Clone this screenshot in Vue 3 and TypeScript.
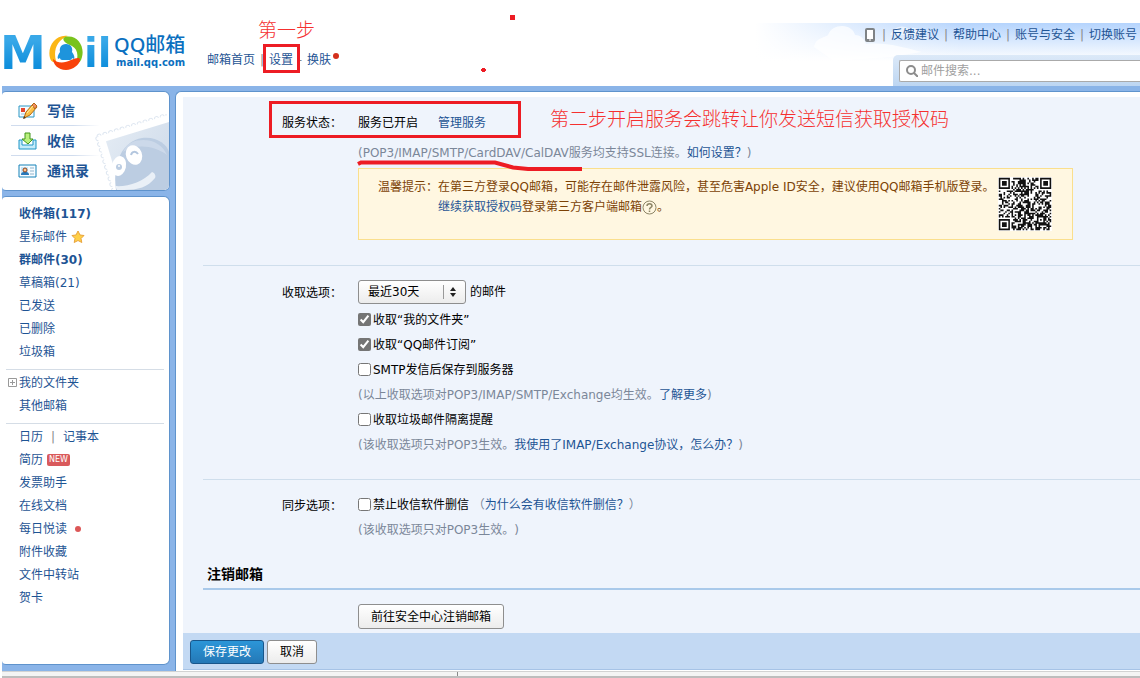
<script setup lang="ts">
import { ref } from 'vue'

interface Folder {
  name: string
  bold?: boolean
  mark?: 'star' | 'new' | 'dot' | 'plus'
  second?: string
}

const folderGroups: Folder[][] = [
  [
    { name: '收件箱(117)', bold: true },
    { name: '星标邮件', mark: 'star' },
    { name: '群邮件(30)', bold: true },
    { name: '草稿箱(21)' },
    { name: '已发送' },
    { name: '已删除' },
    { name: '垃圾箱' },
  ],
  [{ name: '我的文件夹', mark: 'plus' }, { name: '其他邮箱' }],
  [
    { name: '日历', second: '记事本' },
    { name: '简历', mark: 'new' },
    { name: '发票助手' },
    { name: '在线文档' },
    { name: '每日悦读', mark: 'dot' },
    { name: '附件收藏' },
    { name: '文件中转站' },
    { name: '贺卡' },
  ],
]

const topLinks: string[] = ['反馈建议', '帮助中心', '账号与安全', '切换账号']

const range = ref('最近30天')
const myFolders = ref(true)
const subscriptions = ref(true)
const saveSent = ref(false)
const spamNotice = ref(false)
const forbidDelete = ref(false)

const QR_SIZE = 33

function square(x: number, y: number, cx: number, cy: number): number {
  return Math.max(Math.abs(x - cx), Math.abs(y - cy))
}

function buildQr(): string {
  let seed = 20117
  let d = ''
  for (let y = 0; y < QR_SIZE; y++) {
    for (let x = 0; x < QR_SIZE; x++) {
      seed = (seed * 1103515245 + 12345) % 2147483648
      let dark = (seed >> 12) % 100 < 54
      if (x === 6 || y === 6) dark = (x + y) % 2 === 0
      const align = square(x, y, 26, 26)
      if (align <= 2) dark = align !== 1
      for (const [cx, cy] of [[3, 3], [29, 3], [3, 29]]) {
        const ring = square(x, y, cx, cy)
        if (ring <= 4) dark = ring < 2 || ring === 3
      }
      if (dark) d += `M${x} ${y}h1v1h-1z`
    }
  }
  return d
}

const qrPath = buildQr()
const perforation = Array.from({ length: 14 }, (_, i) => 3 + i * 6)
</script>

<template>
  <div class="page" lang="zh-CN">
    <header class="header">
      <div class="brand" aria-label="QQ邮箱">
        <span class="brand-m">M</span>
        <svg class="brand-ball" width="36" height="36" viewBox="0 0 36 36" aria-hidden="true">
          <circle cx="18" cy="18" r="18" fill="#fff" />
          <path d="M20 1C7-1-1 12 2 23c1 4 4 5 6 3C5 15 9 5 20 1z" fill="#fbb615" />
          <path d="M17 2c12-3 20 9 17 20-1 5-4 7-6 6 3-9 1-14-4-17-4-2-7-3-8-5-1-2-1-3 1-4z" fill="#79c31c" />
          <path d="M5 24c5 5 12 4 18 1 5-2 9-3 9 0 0 4-7 10-14 10C10 35 5 29 5 24z" fill="#f8420b" />
          <path d="M18 9c-5 0-7 4-6 8-2 3-3 5-2 7l2-1c0 1 1 2 2 2h8c1 0 2-1 2-2l2 1c1-2 0-4-2-7 1-4-1-8-6-8z" fill="#1e94dc" />
        </svg>
        <span class="brand-il">il</span>
        <div class="brand-text">
          <strong>QQ邮箱</strong>
          <span>mail.qq.com</span>
        </div>
      </div>

      <nav class="quick">
        <a href="#">邮箱首页</a><i>|</i><a href="#">设置</a><i>-</i><a href="#">换肤</a>
        <b class="quick-dot"></b>
      </nav>

      <div class="sky">
        <svg class="cloud" width="110" height="40" viewBox="0 0 110 40" aria-hidden="true">
          <path d="M0 24C2 14 11 15 14 12 16 6 22 3 28 3c7 0 12 4 13 9 6 0 10 5 11 9 20-2 36 3 56 8L76 34 20 38z" fill="#fff" opacity=".7" />
          <path d="M76 12c4-8 12-11 19-6 5-3 12 0 13 6z" fill="#fff" opacity=".5" />
        </svg>
        <nav class="toplinks">
          <svg width="10" height="14" viewBox="0 0 10 14" aria-hidden="true">
            <rect x="1" y="1" width="8" height="12" rx="1" fill="#fff" stroke="#7f8386" stroke-width="2" />
            <path d="M1 11h8v2H1z" fill="#7f8386" />
            <path d="M4 12h2" stroke="#fff" />
          </svg>
          <template v-for="link in topLinks" :key="link"><i>|</i><a href="#">{{ link }}</a></template>
        </nav>
        <form class="search" @submit.prevent>
          <label class="search-box">
            <svg width="12" height="12" viewBox="0 0 12 12" aria-hidden="true">
              <circle cx="5" cy="5" r="4" fill="none" stroke="#8c8c8c" stroke-width="2" />
              <path d="M8 8l4 4" stroke="#8c8c8c" stroke-width="2" />
            </svg>
            <input type="text" placeholder="邮件搜索..." aria-label="邮件搜索" />
          </label>
        </form>
      </div>
    </header>

    <div class="frame">
      <aside class="side">
        <nav class="card compose">
          <svg class="stamp" width="76" height="76" viewBox="0 0 76 76" aria-hidden="true">
            <defs>
              <linearGradient id="stampFill" x1="0" y1="0" x2="1" y2="1">
                <stop offset="0" stop-color="#e2eaf3" />
                <stop offset="1" stop-color="#c3d2e5" />
              </linearGradient>
            </defs>
            <g transform="translate(3 22) rotate(-17)">
              <circle v-for="p in perforation" :key="'t' + p" :cx="p" cy="1" r="2" fill="#fff" stroke="#dfe7f1" />
              <circle v-for="p in perforation" :key="'l' + p" cx="1" :cy="p" r="2" fill="#fff" stroke="#dfe7f1" />
              <path d="M1 1h100v90H1z" fill="#fff" />
              <path d="M8 8h90v80H8z" fill="url(#stampFill)" />
            </g>
            <path d="M23 76C19 48 30 27 49 24c14-2 25 6 27 14v38z" fill="#bccde2" />
            <path d="M30 38c4-9 11-12 20-12 12 0 20 6 24 15-12-9-31-12-44-3z" fill="#dbe5f1" opacity=".5" />
            <ellipse cx="26" cy="52" rx="7" ry="10" transform="rotate(12 26 52)" fill="#fff" />
            <ellipse cx="41" cy="41" rx="8" ry="10" transform="rotate(-20 41 41)" fill="#fff" />
            <circle cx="26" cy="53" r="3" fill="#bccde2" />
            <circle cx="26" cy="52" r="1" fill="#fff" />
            <path d="M38 41c1-4 5-4 7-1" fill="none" stroke="#b3c6de" stroke-width="2" />
            <path d="M22 72c13 1 28-4 37-14 3 1 4 4 3 6-7 9-17 12-31 12h-7z" fill="#eaf0f7" />
          </svg>
          <a href="#">
            <svg width="20" height="18" viewBox="0 0 20 18" aria-hidden="true">
              <path d="M1 4h15v11H1z" fill="#f5fbff" stroke="#2a96c4" />
              <path d="M3 6h4v4H3z" fill="#e5462c" />
              <path d="M3 12h5" stroke="#9fc4dc" />
              <path d="M6 16l2-6 7-8 4 3-7 8z" fill="#fdbf45" stroke="#b36a16" />
              <path d="M14 3l2-2 3 3-2 3z" fill="#f28d62" stroke="#b36a16" />
              <path d="M9 11l6-7" stroke="#fff0a4" />
              <path d="M5 17l1-3 2 2z" fill="#5b3a16" />
            </svg>写信</a>
          <a href="#">
            <svg width="20" height="18" viewBox="0 0 20 18" aria-hidden="true">
              <path d="M1 8h3v5h11V8h3v9H1z" fill="#c5ecfa" stroke="#1f95c6" />
              <path d="M7 1h5v6h3l-5 5-6-5h3z" fill="#baf07d" stroke="#43951c" />
            </svg>收信</a>
          <a href="#">
            <svg width="20" height="18" viewBox="0 0 20 18" aria-hidden="true">
              <path d="M1 3h17v12H1z" fill="#f7fcff" stroke="#1581b8" />
              <path d="M3 5h7v8H3z" fill="#c7e6f8" />
              <path d="M3 13c0-3 2-3 4-3s4 0 4 3z" fill="#2878ba" />
              <circle cx="7" cy="8" r="2" fill="#ffc490" stroke="#8a421c" />
              <path d="M12 6h4M12 9h4M12 12h4" stroke="#8fb2cb" />
            </svg>通讯录</a>
        </nav>

        <nav class="card folders">
          <ul v-for="(group, g) in folderGroups" :key="g">
            <li v-for="item in group" :key="item.name" :class="{ bold: item.bold }">
              <svg v-if="item.mark === 'plus'" class="plus" width="9" height="9" viewBox="0 0 9 9" aria-hidden="true">
                <path d="M.5.5h8v8h-8zM2 4.500h5M4.500 2v5" fill="none" stroke="#999" />
              </svg>
              <a href="#">{{ item.name }}</a>
              <template v-if="item.second"><i>|</i><a href="#">{{ item.second }}</a></template>
              <svg v-if="item.mark === 'star'" class="star" width="14" height="13" viewBox="0 0 14 13" aria-hidden="true">
                <path d="M7 1l2 4 4 .5-3 3 .8 4L7 10.500 3.200 12.500l.8-4-3-3L5 5z" fill="#ffd047" stroke="#e8a33d" />
              </svg>
              <span v-if="item.mark === 'new'" class="new">NEW</span>
              <span v-if="item.mark === 'dot'" class="dot"></span>
            </li>
          </ul>
        </nav>
      </aside>

      <main class="main">
        <div class="content">
          <section class="section status">
            <div class="label">服务状态：</div>
            <div class="field">
              <div class="line tall">服务已开启<a class="manage" href="#">管理服务</a></div>
              <div class="line tall hint">(POP3/IMAP/SMTP/CardDAV/CalDAV服务均支持SSL连接。<a href="#">如何设置？</a>)</div>
              <div class="tip">
                <span>温馨提示：</span>
                <p>在第三方登录QQ邮箱，可能存在邮件泄露风险，甚至危害Apple ID安全，建议使用QQ邮箱手机版登录。<br /><a href="#">继续获取授权码</a>登录第三方客户端邮箱<svg class="help" width="15" height="15" viewBox="0 0 15 15" aria-hidden="true">
                  <circle cx="7.500" cy="7.500" r="6.500" fill="none" stroke="#8d8566" />
                  <path d="M5 6c0-3 5-3 5 0 0 1.500-2.500 1.500-2.500 3.500M7.500 10.500v1.500" fill="none" stroke="#8d8566" stroke-width="1.500" />
                </svg>。</p>
                <svg class="qr" width="54" height="54" viewBox="-.5 -.5 34 34" role="img" aria-label="二维码">
                  <path d="M-.5-.5h34v34h-34z" fill="#fff" />
                  <path :d="qrPath" fill="#111" />
                </svg>
              </div>
            </div>
          </section>

          <section class="section receive">
            <label class="label" for="range">收取选项：</label>
            <div class="field">
              <div class="select-row">
                <span class="select">
                  <select id="range" v-model="range">
                    <option>最近30天</option>
                    <option>全部</option>
                  </select>
                  <svg width="16" height="16" viewBox="0 0 16 16" aria-hidden="true">
                    <path d="M.5 1v14" stroke="#999" />
                    <path d="M7 7l3-4 3 4zM7 9l3 4 3-4z" fill="#222" />
                  </svg>
                </span>
                <span>的邮件</span>
              </div>
              <label class="line"><input v-model="myFolders" type="checkbox" />收取“我的文件夹”</label>
              <label class="line"><input v-model="subscriptions" type="checkbox" />收取“QQ邮件订阅”</label>
              <label class="line"><input v-model="saveSent" type="checkbox" />SMTP发信后保存到服务器</label>
              <div class="line hint">(以上收取选项对POP3/IMAP/SMTP/Exchange均生效。<a href="#">了解更多</a>)</div>
              <label class="line"><input v-model="spamNotice" type="checkbox" />收取垃圾邮件隔离提醒</label>
              <div class="line hint">(该收取选项只对POP3生效。<a href="#">我使用了IMAP/Exchange协议，怎么办？</a>)</div>
            </div>
          </section>

          <section class="section sync">
            <div class="label">同步选项：</div>
            <div class="field">
              <div class="line hint"><label><input v-model="forbidDelete" type="checkbox" />禁止收信软件删信</label>&nbsp;（<a href="#">为什么会有收信软件删信？</a>）</div>
              <div class="line hint">(该收取选项只对POP3生效。)</div>
            </div>
          </section>

          <h2>注销邮箱</h2>
          <button class="btn cancel-account" type="button">前往安全中心注销邮箱</button>
        </div>
        <div class="toolbar">
          <button class="btn primary" type="button">保存更改</button>
          <button class="btn" type="button">取消</button>
        </div>
      </main>
    </div>
    <div class="scrollbar"></div>

    <div class="notes">
      <span class="note first">第一步</span>
      <span class="note second">第二步开启服务会跳转让你发送短信获取授权码</span>
      <svg width="1140" height="678" viewBox="0 0 1140 678" aria-hidden="true">
        <g fill="none" stroke="#ed1c24">
          <path d="M264.500 45.500h34v26h-34zM270.500 102.500h249v34h-249z" stroke-width="3" />
          <path d="M358 164l3-1.500h134l18 5 15 1.500h54" stroke-width="4" />
        </g>
        <path d="M510 15h5v5h-5zM482 68h3v1h1v2h-1v1h-3v-1h-1v-2h1z" fill="#ed1c24" />
      </svg>
    </div>
  </div>
</template>

<style>
body {
  margin: 0;
  background: #fff;
}
</style>

<style scoped>
.page {
  position: relative;
  display: flex;
  flex-direction: column;
  min-height: 100vh;
  overflow: hidden;
  font: 12px/20px 'DejaVu Sans', 'Noto Sans CJK SC', sans-serif;
  text-spacing-trim: space-all;
  color: #000;
}
a {
  color: #1e5494;
  text-decoration: none;
}
i {
  font-style: normal;
  color: #888;
}
.header {
  display: flex;
  height: 86px;
}
.brand {
  display: flex;
  align-items: center;
  box-sizing: border-box;
  width: 203px;
  height: 75px;
  padding-top: 31px;
  font-weight: bold;
}
.brand-m,
.brand-il {
  flex: none;
  line-height: 44px;
  background: linear-gradient(#38a8e8 20%, #108fdc 80%);
  background-clip: text;
  color: transparent;
}
.brand-m {
  width: 48px;
  font-size: 46px;
}
.brand-ball {
  flex: none;
}
.brand-il {
  width: 30px;
  font-size: 40px;
}
.brand-text {
  display: flex;
  flex-direction: column;
  gap: 2px;
  margin-bottom: 4px;
  white-space: nowrap;
  color: #0b70c0;
}
.brand-text strong {
  font: bold 20px/22px 'DejaVu Sans', 'Noto Sans CJK SC', sans-serif;
  font-family: 'Noto Sans', 'Noto Sans CJK SC', sans-serif;
  font-weight: 500;
}
.brand-text span {
  padding-left: 2px;
  font: bold 10px/10px 'DejaVu Sans', sans-serif;
}
.quick {
  display: flex;
  align-items: flex-start;
  padding: 50px 0 0 4px;
}
.quick i {
  width: 14px;
  text-align: center;
}
.quick-dot {
  width: 6px;
  height: 6px;
  margin: 3px 0 0 2px;
  border-radius: 50%;
  background: #d3301c;
}
.sky {
  position: relative;
  display: flex;
  flex-direction: column;
  align-items: flex-end;
  flex: 1;
  margin-top: 23px;
  background: linear-gradient(90deg, #fff 52%, rgba(255, 255, 255, 0) 78%), linear-gradient(#b5d4fd, #fff 38px);
}
.cloud {
  position: absolute;
  top: 0;
  right: 216px;
}
.toplinks {
  position: relative;
  display: flex;
  align-items: center;
  height: 24px;
  margin-bottom: 8px;
  padding-right: 3px;
}
.toplinks i {
  width: 14px;
  text-align: center;
}
.toplinks svg {
  margin-right: 2px;
}
.search {
  position: relative;
  box-sizing: border-box;
  width: 247px;
  height: 31px;
  padding: 5px 0 0 6px;
  border-radius: 5px 0 0 0;
  background: linear-gradient(#dce9f8, #bdd6f2);
}
.search-box {
  display: flex;
  align-items: center;
  box-sizing: border-box;
  height: 22px;
  padding-left: 6px;
  border: 1px solid #aaa;
  border-right: 0;
  border-radius: 2px 0 0 2px;
  background: #fff;
}
.search-box input {
  flex: 1;
  min-width: 0;
  padding: 0 3px;
  border: 0;
  outline: 0;
  background: none;
  font: inherit;
}
.search-box input::placeholder {
  color: #a0a0a0;
}
.frame {
  display: flex;
  flex: 1;
  margin-left: 2px;
  padding-top: 5px;
  background: #8ab4e8;
}
.side {
  display: flex;
  flex-direction: column;
  flex: none;
  gap: 5px;
  box-sizing: border-box;
  width: 173px;
  padding: 0 5px 6px 0;
}
.card {
  position: relative;
  border: 1px solid #5f93cc;
  border-left: 0;
  border-radius: 4px 6px 6px 4px;
  background: #fff;
}
.compose {
  padding: 4px 0;
  overflow: hidden;
}
.compose a {
  position: relative;
  display: flex;
  align-items: center;
  gap: 9px;
  height: 29px;
  margin: 0 70px 0 9px;
  padding-left: 7px;
  border-bottom: 1px solid;
  border-image: linear-gradient(90deg, #d0dcee 70%, #fff) 1;
  font-size: 14px;
  font-weight: bold;
}
.compose a:last-child {
  border-bottom-color: transparent;
  border-image: none;
}
.stamp {
  position: absolute;
  right: 0;
  bottom: 0;
}
.folders {
  flex: 1;
  padding: 5px 5px 0 4px;
}
.folders ul {
  margin: 0;
  padding: 0;
  list-style: none;
}
.folders ul + ul {
  margin-top: 6px;
  padding-top: 1px;
  border-top: 1px solid #d5dde6;
}
.folders li {
  position: relative;
  display: flex;
  align-items: center;
  height: 23px;
  padding-left: 13px;
}
.folders .bold {
  font-weight: bold;
}
.folders i {
  width: 20px;
  text-align: center;
}
.plus {
  position: absolute;
  left: 2px;
}
.star {
  margin-left: 4px;
}
.new {
  margin-left: 4px;
  padding: 0 2px;
  border-radius: 2px;
  background: #d95a5c;
  color: #fff;
  font: 8px/12px 'DejaVu Sans', sans-serif;
}
.dot {
  width: 6px;
  height: 6px;
  margin-left: 8px;
  border-radius: 50%;
  background: #dc5757;
}
.main {
  display: flex;
  flex: 1;
  flex-direction: column;
  min-width: 0;
  padding: 5px 0 1px 7px;
  border: solid #5f93cc;
  border-width: 1px 0 0 1px;
  border-radius: 6px 0 0 0;
  background: #fff;
}
.content {
  flex: 1;
  padding: 0 0 4px 20px;
  background: #eff4fc;
}
.section {
  display: grid;
  grid-template-columns: 76px minmax(0, 1fr);
  padding-left: 79px;
}
.section + .section {
  border-top: 1px solid #cfdeec;
}
.status {
  padding-top: 11px;
  padding-bottom: 25px;
}
.status .label {
  line-height: 30px;
}
.receive {
  padding-top: 14px;
  padding-bottom: 22px;
}
.receive > .label {
  line-height: 26px;
}
.sync {
  padding-top: 12px;
}
.sync > .label {
  line-height: 28px;
}
.line {
  display: flex;
  align-items: center;
  height: 25px;
  white-space: nowrap;
}
.tall {
  height: 30px;
}
.manage {
  margin-left: 20px;
}
.hint {
  color: #7b8799;
}
.hint label {
  display: flex;
  align-items: center;
  color: #000;
}
input[type='checkbox'] {
  width: 13px;
  height: 13px;
  margin: 0 2px 0 0;
  accent-color: #757575;
}
.tip {
  display: flex;
  box-sizing: border-box;
  max-width: 715px;
  padding: 8px 20px 8px 19px;
  border: 1px solid #fadf8d;
  background: #fff7e1;
  color: #7c4205;
  white-space: nowrap;
}
.tip p {
  flex: 1;
  margin: 0;
}
.help {
  vertical-align: -4px;
}
.qr {
  flex: none;
}
.select-row {
  display: flex;
  align-items: center;
  gap: 4px;
  height: 24px;
  margin-bottom: 3px;
}
.select {
  position: relative;
}
.select select {
  display: block;
  appearance: none;
  width: 108px;
  height: 24px;
  padding: 0 9px;
  border: 1px solid #8e8e8e;
  border-radius: 3px;
  background: linear-gradient(#fff, #ececec);
  font: inherit;
  color: #000;
}
.select svg {
  position: absolute;
  top: 4px;
  right: 7px;
  pointer-events: none;
}
h2 {
  margin: 20px 0 14px;
  padding: 0 0 2px 4px;
  border-bottom: 2px solid #a9c9ea;
  font-size: 14px;
  line-height: 24px;
}
.btn {
  height: 24px;
  padding: 0 12px;
  border: 1px solid #8e8e8e;
  border-radius: 3px;
  background: linear-gradient(#fff, #ececec);
  font: inherit;
  color: #000;
}
.cancel-account {
  display: block;
  height: 25px;
  margin-left: 155px;
}
.toolbar {
  display: flex;
  align-items: center;
  gap: 3px;
  box-sizing: border-box;
  height: 37px;
  padding: 2px 0 0 7px;
  border-bottom: 1px solid #a6c3e6;
  background: #c3d9f3;
}
.primary {
  border-color: #18568b;
  background: linear-gradient(#2c96d8, #2478b6);
  color: #fff;
}
.scrollbar {
  display: flex;
  height: 4px;
  margin-left: 2px;
  border-top: 1px solid #d2d2d2;
  border-bottom: 2px solid #bdbdbd;
  background: #f4f4f4;
}
.scrollbar::before {
  content: '';
  width: 40%;
  border-right: 1px solid #8a8a8a;
}
.notes {
  position: absolute;
  top: 0;
  left: 0;
  pointer-events: none;
}
.notes svg {
  display: block;
}
.note {
  position: absolute;
  white-space: nowrap;
  color: #f5302f;
  font: 300 19px/24px 'Liberation Serif', 'Noto Sans CJK SC', serif;
}
.first {
  top: 19px;
  left: 258px;
}
.second {
  top: 108px;
  left: 550px;
}
</style>
